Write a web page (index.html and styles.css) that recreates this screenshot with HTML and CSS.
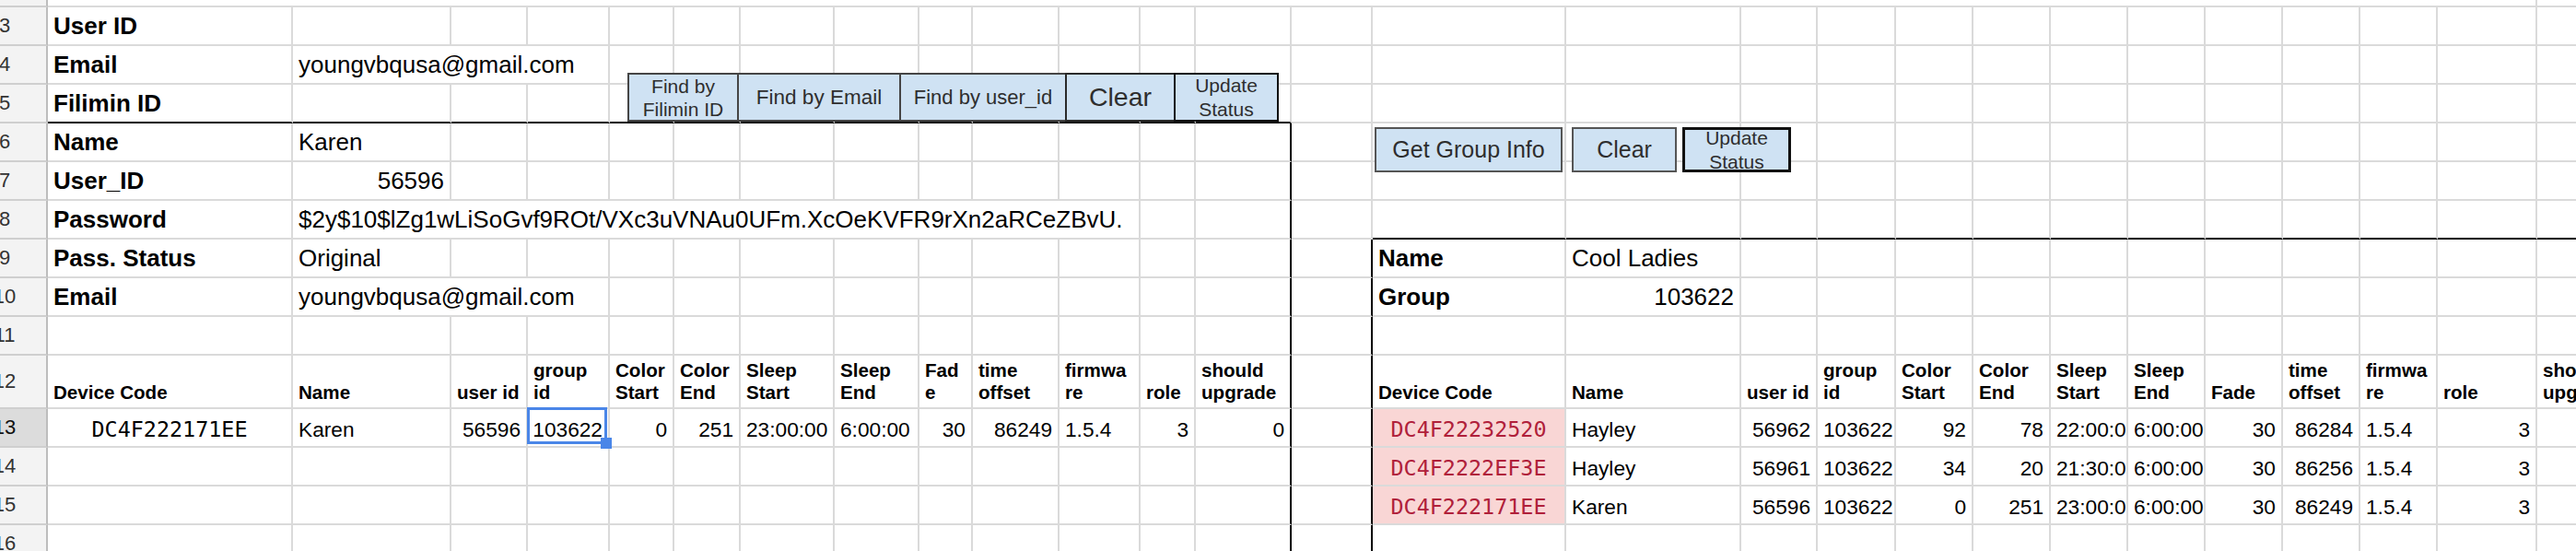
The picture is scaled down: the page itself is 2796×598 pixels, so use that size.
FILE: index.html
```html
<!DOCTYPE html>
<html lang="en">
<head>
    <meta charset="UTF-8">
    <title>Device Lookup</title>
    <link rel="stylesheet" href="styles.css">
</head>
<body>

<div class="sheet">
    <!-- row 2 (merged title row, mostly scrolled away) -->
    <div class="row top"><div class="rh"></div><div class="span26"></div><div></div></div>

    <!-- user lookup -->
    <div class="row"><div class="rh"><span>3</span></div><div class="lbl">User ID</div><div></div><div></div><div></div><div></div><div></div><div></div><div></div><div></div><div></div><div></div><div></div><div></div><div></div><div></div><div></div><div></div><div></div><div></div><div></div><div></div><div></div><div></div><div></div><div></div><div></div><div></div></div>
    <div class="row"><div class="rh"><span>4</span></div><div class="lbl">Email</div><div class="span3">youngvbqusa@gmail.com</div><div></div><div></div><div></div><div></div><div></div><div></div><div></div><div></div><div></div><div></div><div></div><div></div><div></div><div></div><div></div><div></div><div></div><div></div><div></div><div></div><div></div><div></div><div></div></div>
    <div class="row"><div class="rh"><span>5</span></div><div class="lbl bb">Filimin ID</div><div class="bb"></div><div class="bb"></div><div class="bb"></div><div class="bb"></div><div class="bb"></div><div class="bb"></div><div class="bb"></div><div class="bb"></div><div class="bb"></div><div class="bb"></div><div class="bb"></div><div class="bb"></div><div></div><div></div><div></div><div></div><div></div><div></div><div></div><div></div><div></div><div></div><div></div><div></div><div></div><div></div></div>

    <!-- user details -->
    <div class="row"><div class="rh"><span>6</span></div><div class="lbl">Name</div><div>Karen</div><div></div><div></div><div></div><div></div><div></div><div></div><div></div><div></div><div></div><div></div><div class="br"></div><div></div><div></div><div></div><div></div><div></div><div></div><div></div><div></div><div></div><div></div><div></div><div></div><div></div><div></div></div>
    <div class="row"><div class="rh"><span>7</span></div><div class="lbl">User_ID</div><div class="r">56596</div><div></div><div></div><div></div><div></div><div></div><div></div><div></div><div></div><div></div><div></div><div class="br"></div><div></div><div></div><div></div><div></div><div></div><div></div><div></div><div></div><div></div><div></div><div></div><div></div><div></div><div></div></div>
    <div class="row"><div class="rh"><span>8</span></div><div class="lbl">Password</div><div class="span10">$2y$10$lZg1wLiSoGvf9ROt/VXc3uVNAu0UFm.XcOeKVFR9rXn2aRCeZBvU.</div><div></div><div class="br"></div><div></div><div class="bb"></div><div class="bb"></div><div class="bb"></div><div class="bb"></div><div class="bb"></div><div class="bb"></div><div class="bb"></div><div class="bb"></div><div class="bb"></div><div class="bb"></div><div class="bb"></div><div class="bb"></div><div class="bb"></div></div>
    <div class="row"><div class="rh"><span>9</span></div><div class="lbl">Pass. Status</div><div>Original</div><div></div><div></div><div></div><div></div><div></div><div></div><div></div><div></div><div></div><div></div><div class="br"></div><div class="br"></div><div class="lbl">Name</div><div>Cool Ladies</div><div></div><div></div><div></div><div></div><div></div><div></div><div></div><div></div><div></div><div></div><div></div></div>
    <div class="row"><div class="rh"><span>10</span></div><div class="lbl">Email</div><div class="span3">youngvbqusa@gmail.com</div><div></div><div></div><div></div><div></div><div></div><div></div><div></div><div></div><div class="br"></div><div class="br"></div><div class="lbl">Group</div><div class="r">103622</div><div></div><div></div><div></div><div></div><div></div><div></div><div></div><div></div><div></div><div></div><div></div></div>
    <div class="row"><div class="rh"><span>11</span></div><div></div><div></div><div></div><div></div><div></div><div></div><div></div><div></div><div></div><div></div><div></div><div></div><div class="br"></div><div class="br"></div><div></div><div></div><div></div><div></div><div></div><div></div><div></div><div></div><div></div><div></div><div></div><div></div><div></div></div>

    <!-- device tables -->
    <div class="row head"><div class="rh"><span>12</span></div><div>Device Code</div><div>Name</div><div>user id</div><div><span>group<br>id</span></div><div><span>Color<br>Start</span></div><div><span>Color<br>End</span></div><div><span>Sleep<br>Start</span></div><div><span>Sleep<br>End</span></div><div><span>Fad<br>e</span></div><div><span>time<br>offset</span></div><div><span>firmwa<br>re</span></div><div>role</div><div class="br"><span>should<br>upgrade</span></div><div class="br"></div><div>Device Code</div><div>Name</div><div>user id</div><div><span>group<br>id</span></div><div><span>Color<br>Start</span></div><div><span>Color<br>End</span></div><div><span>Sleep<br>Start</span></div><div><span>Sleep<br>End</span></div><div>Fade</div><div><span>time<br>offset</span></div><div><span>firmwa<br>re</span></div><div>role</div><div><span>should<br>upgrade</span></div></div>
    <div class="row data"><div class="rh on"><span>13</span></div><div class="dev">DC4F222171EE</div><div>Karen</div><div class="r">56596</div><div class="r sel">103622<div class="selbox"></div></div><div class="r">0</div><div class="r">251</div><div class="clip">23:00:00</div><div class="clip">6:00:00</div><div class="r">30</div><div class="r">86249</div><div>1.5.4</div><div class="r">3</div><div class="r br">0</div><div class="br"></div><div class="dev bad">DC4F22232520</div><div>Hayley</div><div class="r">56962</div><div class="clip">103622</div><div class="r">92</div><div class="r">78</div><div class="clip">22:00:00</div><div class="clip">6:00:00</div><div class="r">30</div><div class="r">86284</div><div>1.5.4</div><div class="r">3</div><div></div></div>
    <div class="row data"><div class="rh"><span>14</span></div><div></div><div></div><div></div><div></div><div></div><div></div><div></div><div></div><div></div><div></div><div></div><div></div><div class="br"></div><div class="br"></div><div class="dev bad">DC4F2222EF3E</div><div>Hayley</div><div class="r">56961</div><div class="clip">103622</div><div class="r">34</div><div class="r">20</div><div class="clip">21:30:00</div><div class="clip">6:00:00</div><div class="r">30</div><div class="r">86256</div><div>1.5.4</div><div class="r">3</div><div></div></div>
    <div class="row data"><div class="rh"><span>15</span></div><div></div><div></div><div></div><div></div><div></div><div></div><div></div><div></div><div></div><div></div><div></div><div></div><div class="br"></div><div class="br"></div><div class="dev bad">DC4F222171EE</div><div>Karen</div><div class="r">56596</div><div class="clip">103622</div><div class="r">0</div><div class="r">251</div><div class="clip">23:00:00</div><div class="clip">6:00:00</div><div class="r">30</div><div class="r">86249</div><div>1.5.4</div><div class="r">3</div><div></div></div>
    <div class="row data"><div class="rh"><span>16</span></div><div></div><div></div><div></div><div></div><div></div><div></div><div></div><div></div><div></div><div></div><div></div><div></div><div class="br"></div><div class="br"></div><div></div><div></div><div></div><div></div><div></div><div></div><div></div><div></div><div></div><div></div><div></div><div></div><div></div></div>

    <!-- drawings floating over the grid -->
    <div class="tools">
        <div class="by-filimin">Find by<br>Filimin ID</div>
        <div class="by-email">Find by Email</div>
        <div class="by-user">Find by user_id</div>
        <div class="clear">Clear</div>
        <div class="update">Update<br>Status</div>
    </div>

    <div class="group-tools">
        <div class="get-group">Get Group Info</div>
        <div class="group-clear">Clear</div>
        <div class="group-update">Update<br>Status</div>
    </div>
</div>

</body>
</html>
```

FILE: styles.css
```css
/* Spreadsheet grid */
html, body {
    margin: 0;
    background: #fff;
    overflow: hidden;
}
body {
    font-family: "Liberation Sans", Arial, sans-serif;
    color: #000;
}
.sheet {
    position: relative;
    width: 2874px;
}
.row {
    display: grid;
    grid-template-columns: 52px 266px 172px 83px 89px 70px 72px 102px 92px 58px 94px 88px 60px 104px 88px 210px 190px 83px 85px 84px 84px 84px 84px 84px 84px 84px 108px 120px;
    height: 42px;
    font-size: 26px;
}
.row.top { height: 8px; }
.row.head { height: 58px; font-size: 20.6px; font-weight: bold; }
.row.data { font-size: 22.7px; }

.row > div {
    box-sizing: border-box;
    min-width: 0;
    display: flex;
    align-items: flex-end;
    padding: 0 6px 4px;
    border-right: 2px solid #dadada;
    border-bottom: 2px solid #dadada;
    white-space: nowrap;
    line-height: 1.2;
}
.row.top > div { padding: 0; }
.row.head > div { line-height: 24px; }

.row > .span3 { grid-column: span 3; }
.row > .span10 { grid-column: span 10; }
.row > .span26 { grid-column: span 26; }

/* row numbers, scrolled partly out of view on the left */
.row > .rh {
    padding: 0;
    align-items: center;
    background: #f3f3f3;
    border-bottom-color: #cfcfcf;
    border-right-color: #bdbdbd;
    font-size: 22px;
    font-weight: normal;
    color: #333;
    line-height: normal;
}
.row > .rh.on { background: #dcdcdc; color: #111; }
.rh span {
    display: flex;
    justify-content: center;
    width: 10px;
}

.row > .lbl { font-weight: bold; }
.row > .r { justify-content: flex-end; }
.row > .clip { overflow: hidden; }
.row > .bb { border-bottom-color: #000; }
.row > .br { border-right-color: #000; }

.row > .dev {
    justify-content: center;
    font-family: "DejaVu Sans Mono", "Liberation Mono", monospace;
    font-size: 23.4px;
}
.row > .bad {
    background: #f9d6d5;
    color: #b0203a;
}

/* active cell */
.row > .sel { position: relative; }
.selbox {
    position: absolute;
    left: -1px;
    top: -2px;
    right: 1px;
    bottom: 2px;
    border: 3px solid #4a86e8;
}
.selbox::after {
    content: "";
    position: absolute;
    right: -8px;
    bottom: -8px;
    width: 12px;
    height: 12px;
    background: #4a86e8;
}

/* button drawings */
.tools, .group-tools {
    position: absolute;
    display: flex;
}
.tools { left: 681px; top: 79px; height: 53px; }
.group-tools { left: 1492px; top: 138px; height: 49px; }

.tools div, .group-tools div {
    box-sizing: border-box;
    display: flex;
    align-items: center;
    justify-content: center;
    text-align: center;
    background: #cfe2f3;
    border: 2px solid #454545;
    color: #2e2e2e;
    white-space: nowrap;
}
.tools div + div { margin-left: -2px; }

.by-filimin { width: 121px; font-size: 21px; line-height: 25px; }
.by-email { width: 178px; font-size: 22.5px; }
.by-user { width: 182px; font-size: 22px; }
.tools .clear { width: 120px; font-size: 28.5px; border-color: #2a2a2a; }
.tools .update { width: 114px; font-size: 21px; line-height: 26px; border-color: #111; }

.group-tools div { border-color: #555; }
.get-group { width: 204px; font-size: 25px; }
.group-clear { width: 114px; margin-left: 10px; font-size: 25px; }
.group-tools .group-update {
    width: 118px;
    margin-left: 6px;
    font-size: 21px;
    line-height: 26px;
    border: 3px solid #111;
}
```
